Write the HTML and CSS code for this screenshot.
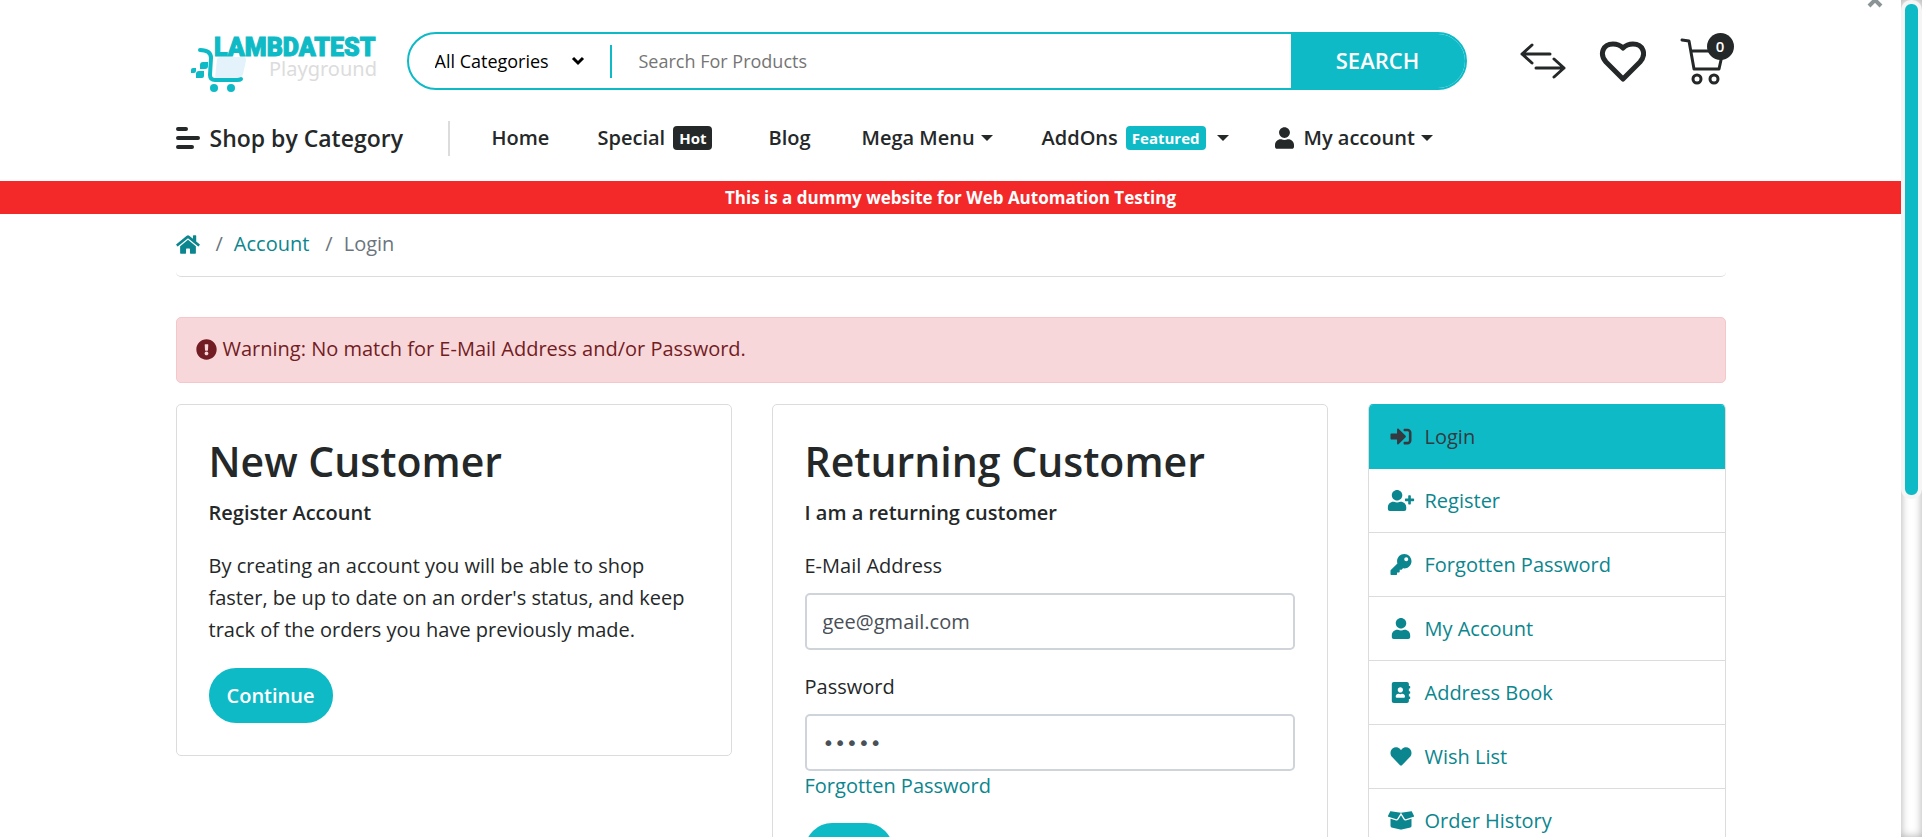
FILE: index.html
```html
<!DOCTYPE html>
<html lang="en">
<head>
<meta charset="utf-8">
<title>Account Login</title>
<link rel="stylesheet" href="styles.css">
</head>
<body>
<svg class="sprite" aria-hidden="true">
  <symbol id="i-user" viewBox="0 0 448 512"><path d="M224 256c70.700 0 128-57.300 128-128S294.700 0 224 0 96 57.300 96 128s57.300 128 128 128zm89.600 32h-16.700c-22.200 10.200-46.900 16-72.900 16s-50.600-5.800-72.900-16h-16.700C60.200 288 0 348.200 0 422.400V464c0 26.500 21.500 48 48 48h352c26.500 0 48-21.500 48-48v-41.600c0-74.200-60.200-134.400-134.400-134.400z"/></symbol>
  <symbol id="i-user-plus" viewBox="0 0 640 512"><path d="M624 208h-64v-64c0-8.800-7.200-16-16-16h-32c-8.800 0-16 7.200-16 16v64h-64c-8.800 0-16 7.200-16 16v32c0 8.800 7.200 16 16 16h64v64c0 8.800 7.200 16 16 16h32c8.800 0 16-7.200 16-16v-64h64c8.800 0 16-7.200 16-16v-32c0-8.800-7.200-16-16-16zM224 256c70.700 0 128-57.300 128-128S294.700 0 224 0 96 57.300 96 128s57.300 128 128 128zm89.600 32h-16.700c-22.200 10.200-46.900 16-72.900 16s-50.600-5.800-72.900-16h-16.700C60.200 288 0 348.200 0 422.400V464c0 26.500 21.500 48 48 48h352c26.500 0 48-21.500 48-48v-41.600c0-74.200-60.200-134.400-134.400-134.400z"/></symbol>
  <symbol id="i-signin" viewBox="0 0 512 512"><path d="M416 448h-84c-6.600 0-12-5.400-12-12v-40c0-6.600 5.400-12 12-12h84c17.700 0 32-14.300 32-32V160c0-17.700-14.300-32-32-32h-84c-6.600 0-12-5.400-12-12V76c0-6.600 5.400-12 12-12h84c53 0 96 43 96 96v192c0 53-43 96-96 96zm-47-209L201 71c-15-15-41-4.500-41 17v96H24c-13.300 0-24 10.700-24 24v96c0 13.300 10.700 24 24 24h136v96c0 21.500 26 32 41 17l168-168c9.300-9.400 9.300-24.600 0-34z"/></symbol>
  <symbol id="i-key" viewBox="0 0 512 512"><path d="M512 176.001C512 273.203 433.202 352 336 352c-11.220 0-22.190-1.062-32.827-3.069l-24.012 27.014A23.999 23.999 0 0 1 261.223 384H224v40c0 13.255-10.745 24-24 24h-40v40c0 13.255-10.745 24-24 24H24c-13.255 0-24-10.745-24-24v-78.059c0-6.365 2.529-12.470 7.029-16.971l161.802-161.802C163.108 213.814 160 195.271 160 176 160 78.798 238.797.001 335.999 0 433.488-.001 512 78.511 512 176.001zM336 128c0 26.510 21.490 48 48 48s48-21.490 48-48-21.490-48-48-48-48 21.490-48 48z"/></symbol>
  <symbol id="i-book" viewBox="0 0 448 512"><path d="M436 160c6.600 0 12-5.400 12-12v-40c0-6.600-5.400-12-12-12h-20V48c0-26.500-21.500-48-48-48H48C21.500 0 0 21.500 0 48v416c0 26.500 21.500 48 48 48h320c26.500 0 48-21.500 48-48v-48h20c6.600 0 12-5.400 12-12v-40c0-6.600-5.400-12-12-12h-20v-64h20c6.600 0 12-5.400 12-12v-40c0-6.600-5.400-12-12-12h-20v-64h20zm-228-32c35.300 0 64 28.700 64 64s-28.700 64-64 64-64-28.700-64-64 28.700-64 64-64zm112 236.800c0 10.600-10 19.200-22.400 19.200H118.400C106 384 96 375.400 96 364.800v-19.200c0-31.800 30.100-57.600 67.200-57.600h5c12.300 5.100 25.700 8 39.800 8s27.600-2.900 39.800-8h5c37.100 0 67.200 25.800 67.200 57.600v19.200z"/></symbol>
  <symbol id="i-heart" viewBox="0 0 512 512"><path d="M462.300 62.600C407.500 15.900 326 24.300 275.700 76.200L256 96.500l-19.700-20.300C186.100 24.300 104.500 15.900 49.700 62.600c-62.800 53.600-66.100 149.800-9.900 207.900l193.500 199.800c12.500 12.900 32.800 12.900 45.300 0l193.500-199.800c56.300-58.100 53-154.300-9.800-207.900z"/></symbol>
  <symbol id="i-box" viewBox="0 0 640 512"><path d="M425.700 256c-16.900 0-32.800-9-41.400-23.400L320 126l-64.200 106.600c-8.700 14.500-24.600 23.500-41.500 23.500-4.500 0-9-.6-13.300-1.900L64 215v178c0 14.700 10 27.500 24.200 31l216.200 54.100c10.200 2.500 20.900 2.500 31 0L551.800 424c14.200-3.600 24.200-16.400 24.200-31V215l-137 39.100c-4.300 1.300-8.800 1.900-13.300 1.900zm212.600-112.200L586.800 41c-3.100-6.200-9.800-9.800-16.700-8.900L320 64l91.700 152.100c3.800 6.300 11.400 9.300 18.500 7.300l197.900-56.500c9.900-2.900 14.700-13.900 10.200-23.100zM53.200 41L1.700 143.800c-4.600 9.200.3 20.200 10.100 23l197.900 56.500c7.100 2 14.700-1 18.500-7.300L320 64 69.800 32.100c-6.900-.8-13.500 2.700-16.600 8.900z"/></symbol>
  <symbol id="i-home" viewBox="0 0 576 512"><path d="M280.400 148.300L96 300.100V464a16 16 0 0 0 16 16l112.100-.3a16 16 0 0 0 15.900-16V368a16 16 0 0 1 16-16h64a16 16 0 0 1 16 16v95.600a16 16 0 0 0 16 16.100L464 480a16 16 0 0 0 16-16V300L295.700 148.300a12.200 12.200 0 0 0-15.300 0zM571.600 251.500L488 182.600V44a12 12 0 0 0-12-12h-56a12 12 0 0 0-12 12v72.600L318.500 43a48 48 0 0 0-61 0L4.300 251.500a12 12 0 0 0-1.600 16.900l25.500 31a12 12 0 0 0 16.900 1.600l235.200-193.700a12.200 12.200 0 0 1 15.300 0L530.900 301a12 12 0 0 0 16.900-1.600l25.500-31a12 12 0 0 0-1.700-16.900z"/></symbol>
  <symbol id="i-warn" viewBox="0 0 512 512"><path d="M504 256c0 137-111 248-248 248S8 393 8 256C8 119.100 119 8 256 8s248 111.100 248 248zm-248 50c-25.400 0-46 20.600-46 46s20.600 46 46 46 46-20.600 46-46-20.600-46-46-46zm-43.700-165.300l7.400 136c.4 6.400 5.600 11.300 12 11.300h48.500c6.400 0 11.600-5 12-11.300l7.400-136c.4-6.900-5.100-12.700-12-12.700h-63.400c-6.900 0-12.400 5.800-11.900 12.700z"/></symbol>
</svg>
<div class="window">
  <div class="page">
    <button class="dismiss" aria-label="Close"><svg width="18" height="18" viewBox="0 0 18 18"><path d="M3 3l12 12M15 3L3 15"/></svg></button>
    <header class="container header">
      <div class="topbar">
        <a class="logo" href="#" aria-label="LambdaTest Playground">
          <svg width="188" height="62" viewBox="0 0 188 62">
            <path class="logo-basket" d="M29 27h24q4 0 3 4l-3 13q-1 4-5 4H25l2-19z"/>
            <path class="logo-frame" d="M10 20q11 0 11 8l-1 17q0 5 5 5h22q3 0 4-1"/>
            <g class="logo-fill"><circle cx="24" cy="58" r="4"/><circle cx="41" cy="58" r="4"/><path d="M3 38h3v3q0 2-2 2H1v-3q0-2 2-2zM9 41h5v5q0 2-2 2H6v-4q0-3 3-3zM13 32h5v4q0 3-3 3h-5v-4q0-3 3-3z"/></g>
            <text class="logo-name" x="24" y="26">LAMBDATEST</text>
            <text class="logo-sub" x="79" y="46">Playground</text>
          </svg>
        </a>
        <form class="search">
          <select class="search-cat" aria-label="Category"><option>All Categories</option></select>
          <svg class="chevron" width="14" height="10" viewBox="0 0 14 10"><path d="M2 2l5 5 5-5"/></svg>
          <span class="search-rule"></span>
          <input class="search-input" type="text" placeholder="Search For Products" aria-label="Search For Products">
          <button class="search-btn" type="button">SEARCH</button>
        </form>
        <div class="tools">
          <a href="#" aria-label="Compare"><svg width="48" height="48" viewBox="0 0 48 48"><path class="line3" d="M32 17H4M14 8l-10 9l10 9M18 31h28M36 22l10 9l-10 9"/></svg></a>
          <a href="#" aria-label="Wish list"><svg width="48" height="48" viewBox="0 0 48 48"><path class="line5" d="M25 42L8 25C1 17 5 7 15 7q6 0 10 4q4-4 10-4C45 7 49 17 42 25z"/></svg></a>
          <a class="cart" href="#" aria-label="Cart"><svg width="48" height="48" viewBox="0 0 48 48"><path class="line3" d="M4 3l7 1 5 28h25l4-18H13"/><circle class="line3" cx="19" cy="42" r="4"/><circle class="line3" cx="36" cy="42" r="4"/></svg><span class="count">0</span></a>
        </div>
      </div>
      <nav class="nav">
        <a class="shop" href="#"><svg width="24" height="24" viewBox="0 0 24 24"><path d="M2 3h8M2 12h20M2 21h14"/></svg>Shop by Category</a>
        <a class="nav-home" href="#">Home</a>
        <a class="nav-special" href="#">Special<span class="tag dark">Hot</span></a>
        <a class="nav-blog" href="#">Blog</a>
        <a class="nav-mega" href="#">Mega Menu<span class="caret"></span></a>
        <a class="nav-addons" href="#">AddOns<span class="tag">Featured</span><span class="caret wide"></span></a>
        <a class="nav-account" href="#"><svg class="nav-user" width="19" height="22"><use href="#i-user"/></svg>My account<span class="caret"></span></a>
      </nav>
    </header>
    <p class="notice">This is a dummy website for Web Automation Testing</p>
    <main class="container">
      <nav class="crumbs" aria-label="Breadcrumb">
        <a href="#" aria-label="Home"><svg width="24" height="21"><use href="#i-home"/></svg></a>
        <span class="slash">/</span><a href="#">Account</a><span class="slash">/</span><span>Login</span>
      </nav>
      <div class="alert" role="alert"><svg width="21" height="21"><use href="#i-warn"/></svg>Warning: No match for E-Mail Address and/or Password.</div>
      <div class="columns">
        <section class="card">
          <h2>New Customer</h2>
          <p class="lead">Register Account</p>
          <p>By creating an account you will be able to shop faster, be up to date on an order's status, and keep track of the orders you have previously made.</p>
          <a class="btn" href="#">Continue</a>
        </section>
        <section class="card">
          <h2>Returning Customer</h2>
          <p class="lead">I am a returning customer</p>
          <form>
            <label for="email">E-Mail Address</label>
            <input class="field" id="email" type="text" value="gee@gmail.com">
            <label class="second" for="password">Password</label>
            <input class="field secret" id="password" type="password" value="abcde">
            <a class="forgot" href="#">Forgotten Password</a>
            <button class="btn" type="button">Login</button>
          </form>
        </section>
        <aside class="menu">
          <a class="active" href="#"><svg><use href="#i-signin"/></svg>Login</a>
          <a href="#"><svg><use href="#i-user-plus"/></svg>Register</a>
          <a href="#"><svg><use href="#i-key"/></svg>Forgotten Password</a>
          <a href="#"><svg><use href="#i-user"/></svg>My Account</a>
          <a href="#"><svg><use href="#i-book"/></svg>Address Book</a>
          <a href="#"><svg><use href="#i-heart"/></svg>Wish List</a>
          <a href="#"><svg><use href="#i-box"/></svg>Order History</a>
        </aside>
      </div>
    </main>
  </div>
  <div class="scrollbar"><div class="thumb"></div></div>
</div>
</body>
</html>
```
FILE: styles.css
```css
* { box-sizing: border-box; }
body {
  margin: 0;
  font: 20px/32px "Open Sans", "Noto Sans", sans-serif;
  color: #252829;
  background: #fff;
}
a { color: #0b868e; text-decoration: none; }
p, h2 { margin: 0; }
button, input, select { font: inherit; }
svg { fill: currentColor; flex: none; }
.sprite { position: absolute; width: 0; height: 0; }
.window {
  display: grid;
  grid-template-columns: 1fr 21px;
  height: 100vh;
  overflow: hidden;
}
.page { position: relative; overflow: hidden; }
.container { max-width: 1590px; margin: 0 auto; padding: 0 20px; }

.dismiss {
  position: absolute;
  top: -9px;
  right: 17px;
  display: flex;
  padding: 0;
  border: 0;
  background: none;
  color: #8a9496;
}
.dismiss path { fill: none; stroke: currentColor; stroke-width: 4; }

.header { padding-top: 30px; }
.topbar { display: flex; align-items: center; }
.logo { margin-left: 14px; height: 62px; }
.logo-basket { fill: #e4f3fb; }
.logo-frame { fill: none; stroke: #0ebac5; stroke-width: 4; stroke-linecap: round; }
.logo-fill { fill: #0ebac5; }
.logo-name { font: 900 25px Roboto, sans-serif; fill: #0ebac5; stroke: #0ebac5; stroke-width: 1; }
.logo-sub { font: 20px "Noto Sans", sans-serif; fill: #dcdcdc; }

.search {
  flex: 1;
  display: flex;
  align-items: center;
  height: 58px;
  margin-left: 29px;
  border: 2px solid #0fbac7;
  border-radius: 29px;
  overflow: hidden;
  font-size: 18px;
}
.search-cat {
  width: 136px;
  margin-left: 26px;
  padding: 0;
  border: 0;
  background: none;
  appearance: none;
  color: #000;
}
.chevron path { fill: none; stroke: #000; stroke-width: 3; }
.search-rule { width: 2px; height: 33px; margin-left: 25px; background: #0fbac7; }
.search-input { flex: 1; min-width: 0; padding: 0 27px; border: 0; outline: 0; background: none; }
.search-input::placeholder { color: #757575; opacity: 1; }
.search-btn {
  align-self: stretch;
  width: 174px;
  padding: 0 0 2px;
  border: 0;
  background: #0fbac7;
  color: #fff;
  font-size: 22px;
  font-weight: 600;
}
.tools { display: flex; gap: 32px; margin-left: 51px; }
.tools a { display: flex; color: #252829; }
.line3, .line5 { fill: none; stroke: currentColor; stroke-linecap: round; stroke-linejoin: round; stroke-width: 3; }
.line5 { stroke-width: 5; }
.cart { position: relative; }
.count {
  position: absolute;
  top: -4px;
  right: -8px;
  width: 27px;
  height: 27px;
  border-radius: 50%;
  background: #252829;
  color: #fff;
  font-size: 15px;
  font-weight: 600;
  line-height: 27px;
  text-align: center;
}

.nav { display: flex; align-items: center; height: 89px; padding-top: 3px; font-weight: 600; }
.nav a { display: flex; align-items: center; color: #252829; white-space: nowrap; }
.nav .shop { gap: 10px; width: 274px; height: 35px; border-right: 2px solid #dcdcdc; font-size: 23px; }
.shop path { stroke: currentColor; stroke-width: 4; stroke-linecap: round; }
.nav-home { width: 148px; padding-left: 42px; }
.nav-special { width: 171px; }
.nav-blog { width: 93px; }
.nav-mega { width: 180px; }
.nav-addons { width: 233px; }
.nav-user { margin-right: 10px; }
.tag {
  margin-left: 8px;
  padding: 0 6px;
  border-radius: 4px;
  background: #0fbac7;
  color: #fff;
  font-size: 15px;
  line-height: 24px;
  font-weight: 700;
}
.tag.dark { background: #252829; }
.caret { margin-left: 6px; border: 6px solid transparent; border-top-color: currentColor; border-bottom: 0; }
.caret.wide { margin-left: 11px; }

.notice { background: #f32929; color: #fff; font-size: 17px; font-weight: 700; line-height: 33px; text-align: center; }

.crumbs { display: flex; align-items: center; height: 63px; margin-bottom: 40px; padding-bottom: 2px; border-bottom: 1px solid #dcdcdc; border-radius: 5px; color: #6c757d; }
.crumbs a { display: flex; }
.slash { margin: 0 11px 0 16px; }
.alert {
  display: flex;
  align-items: center;
  gap: 6px;
  height: 66px;
  margin-bottom: 21px;
  padding: 0 19px 2px;
  border: 1px solid #f5c6cb;
  border-radius: 5px;
  background: #f8d7da;
  color: #721c24;
}
.columns { display: grid; grid-template-columns: 1fr 1fr 358px; gap: 40px; align-items: start; }
.card { padding: 31px 32px 32px; border: 1px solid #dcdcdc; border-radius: 5px; }
.card h2 { margin-bottom: 11px; font-size: 41px; line-height: 50px; font-weight: 600; }
.lead { margin-bottom: 21px; font-weight: 600; }
.btn {
  display: inline-block;
  margin-top: 22px;
  padding: 0 18px;
  border: 0;
  border-radius: 27px;
  background: #0fbac7;
  color: #fff;
  font-weight: 600;
  line-height: 55px;
}
.card label { display: block; margin-bottom: 11px; }
.card .second { margin-top: 21px; }
.field { display: block; width: 100%; height: 57px; padding: 0 16px; border: 2px solid #ced4da; border-radius: 5px; color: #495057; }
.secret { font-family: "DejaVu Sans", sans-serif; }
.forgot { display: block; line-height: 30px; }
.menu { border: 1px solid #dcdcdc; border-radius: 5px; overflow: hidden; }
.menu a { display: flex; align-items: center; gap: 10px; height: 64px; padding-left: 18px; border-bottom: 1px solid #dcdcdc; }
.menu svg { width: 28px; height: 21px; }
.menu .active { background: #0fbac7; color: #343a40; border-color: #0fbac7; }
.menu:has(.active:first-child) { border-top-color: #0fbac7; }

.scrollbar { background: #fff; box-shadow: inset 0 0 8px #aaa; }
.thumb { height: 499px; border: 4px solid #f5f5f5; border-radius: 10px; background: #0fbac7; }
```
